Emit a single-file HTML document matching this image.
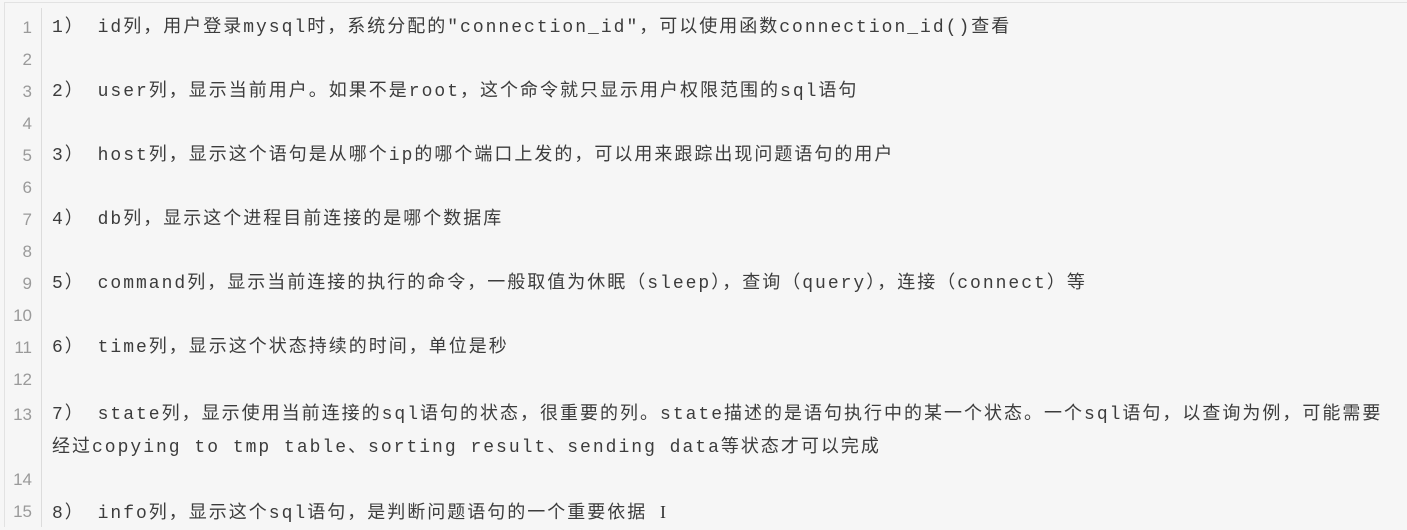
<!DOCTYPE html>
<html><head><meta charset="utf-8"><style>
html,body{margin:0;padding:0;background:#f6f6f6;}
body{width:1407px;height:527px;overflow:hidden;position:relative;}
.box{position:absolute;left:4px;top:2px;right:0;bottom:0;border-top:1px solid #e2e2e2;border-left:1px solid #e2e2e2;background:#f6f6f6;}
.gut{position:absolute;left:41px;top:8px;bottom:0;border-left:1px solid #dcdcdc;}
.r{position:absolute;left:0;height:32px;line-height:32px;white-space:pre;font-family:"Liberation Mono","Noto Sans CJK SC",monospace;font-size:18px;letter-spacing:2px;color:#3c3c3c;}
.n{position:absolute;left:0;width:32px;text-align:right;color:#9a9a9a;font-family:"Liberation Sans",sans-serif;font-size:17px;letter-spacing:0;}
.t{position:absolute;left:52px;}
</style></head><body>
<div class="box"></div><div class="gut"></div>
<div class="r" style="top:12px"><span class="n">1</span><span class="t">1） id列，用户登录mysql时，系统分配的"connection_id"，可以使用函数connection_id()查看</span></div>
<div class="r" style="top:44px"><span class="n">2</span></div>
<div class="r" style="top:76px"><span class="n">3</span><span class="t">2） user列，显示当前用户。如果不是root，这个命令就只显示用户权限范围的sql语句</span></div>
<div class="r" style="top:108px"><span class="n">4</span></div>
<div class="r" style="top:140px"><span class="n">5</span><span class="t">3） host列，显示这个语句是从哪个ip的哪个端口上发的，可以用来跟踪出现问题语句的用户</span></div>
<div class="r" style="top:172px"><span class="n">6</span></div>
<div class="r" style="top:204px"><span class="n">7</span><span class="t">4） db列，显示这个进程目前连接的是哪个数据库</span></div>
<div class="r" style="top:236px"><span class="n">8</span></div>
<div class="r" style="top:268px"><span class="n">9</span><span class="t">5） command列，显示当前连接的执行的命令，一般取值为休眠（sleep），查询（query），连接（connect）等</span></div>
<div class="r" style="top:300px"><span class="n">10</span></div>
<div class="r" style="top:332px"><span class="n">11</span><span class="t">6） time列，显示这个状态持续的时间，单位是秒</span></div>
<div class="r" style="top:364px"><span class="n">12</span></div>
<div class="r" style="top:399px"><span class="n">13</span><span class="t">7） state列，显示使用当前连接的sql语句的状态，很重要的列。state描述的是语句执行中的某一个状态。一个sql语句，以查询为例，可能需要</span></div>
<div class="r" style="top:432px"><span class="t">经过copying to tmp table、sorting result、sending data等状态才可以完成</span></div>
<div class="r" style="top:464px"><span class="n">14</span></div>
<div class="r" style="top:496px"><span class="n">15</span><span class="t">8） info列，显示这个sql语句，是判断问题语句的一个重要依据 <span style="font-family:'Liberation Serif',serif;color:#333">I</span></span></div>
</body></html>
